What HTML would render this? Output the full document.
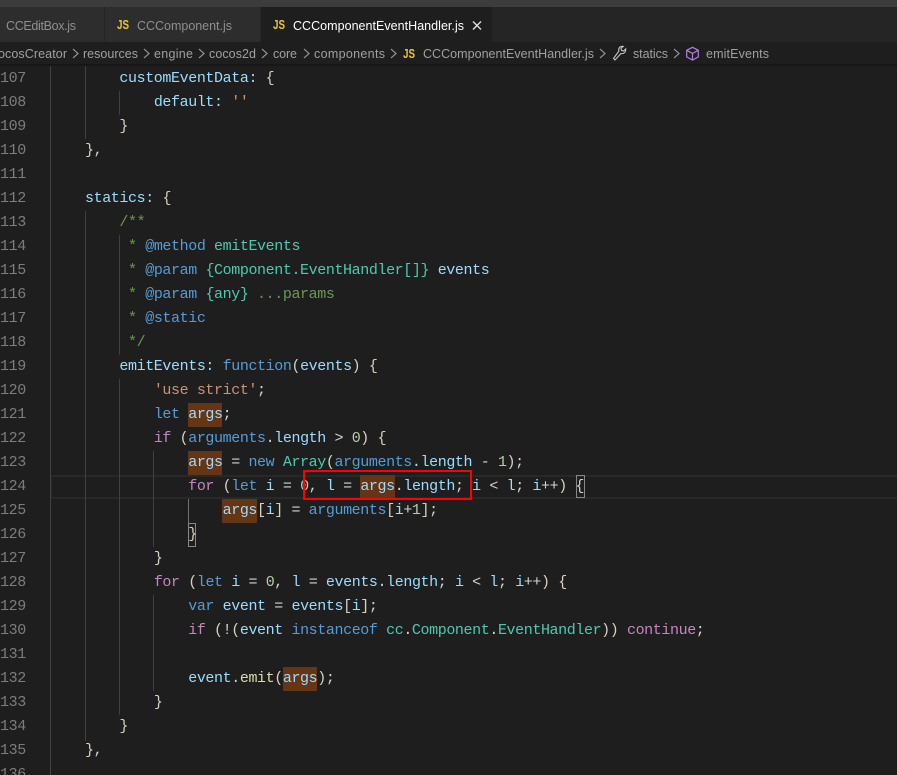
<!DOCTYPE html>
<html><head><meta charset="utf-8">
<style>
html,body{margin:0;padding:0;background:#1e1e1e;}
#r{position:relative;width:897px;height:775px;overflow:hidden;background:#1e1e1e;}
#e{position:absolute;left:0;top:1px;width:897px;height:775px;}
.a{position:absolute;}
.g{position:absolute;width:1px;background:#404040;}
.n{position:absolute;left:0;width:24.5px;text-align:right;color:#7d7d7d;font:15px/24px "Liberation Mono",monospace;letter-spacing:-.4px;height:24px;}
.l{position:absolute;left:50.6px;white-space:pre;color:#d4d4d4;font:15px/24px "Liberation Mono",monospace;letter-spacing:-.4px;height:24px;}
.h{position:absolute;background:#653616;height:24px;}
.p{color:#9cdcfe}.k{color:#569cd6}.c{color:#c586c0}.s{color:#ce9178}.m{color:#6a9955}.t{color:#4ec9b0}.f{color:#dcdcaa}.d{color:#b5cea8}.b{color:#d8d0c0}
svg text{font-family:"Liberation Sans",sans-serif;font-size:12.5px;}
svg text.j{font-size:12.5px;font-weight:700;}
</style></head><body>
<div id="r">
<div id="e">
<div class="a" style="left:50px;top:474px;width:847px;height:24px;box-sizing:border-box;border:2px solid #282828;border-right:0"></div>

<div class="g" style="left:50px;top:65px;height:709px"></div>
<div class="g" style="left:85px;top:65px;height:73px"></div>
<div class="g" style="left:85px;top:210px;height:530px"></div>
<div class="g" style="left:119px;top:90px;height:24px"></div>
<div class="g" style="left:119px;top:234px;height:120px"></div>
<div class="g" style="left:119px;top:378px;height:336px"></div>
<div class="g" style="left:153px;top:450px;height:96px"></div>
<div class="g" style="left:153px;top:594px;height:96px"></div>
<div class="g" style="left:188px;top:498px;height:24px;background:#707070"></div>

<div class="h" style="left:188px;top:402px;width:34px"></div>
<div class="h" style="left:188px;top:450px;width:34px"></div>
<div class="h" style="left:360px;top:474px;width:35px"></div>
<div class="h" style="left:222px;top:498px;width:35px"></div>
<div class="h" style="left:283px;top:666px;width:34px"></div>

<div class="a" style="left:576px;top:474px;width:9px;height:23px;box-sizing:border-box;border:1px solid #888"></div>
<div class="a" style="left:188px;top:522px;width:8px;height:24px;box-sizing:border-box;border:1px solid #888"></div>

<div class="n" style="top:66px">107</div>
<div class="n" style="top:90px">108</div>
<div class="n" style="top:114px">109</div>
<div class="n" style="top:138px">110</div>
<div class="n" style="top:162px">111</div>
<div class="n" style="top:186px">112</div>
<div class="n" style="top:210px">113</div>
<div class="n" style="top:234px">114</div>
<div class="n" style="top:258px">115</div>
<div class="n" style="top:282px">116</div>
<div class="n" style="top:306px">117</div>
<div class="n" style="top:330px">118</div>
<div class="n" style="top:354px">119</div>
<div class="n" style="top:378px">120</div>
<div class="n" style="top:402px">121</div>
<div class="n" style="top:426px">122</div>
<div class="n" style="top:450px">123</div>
<div class="n" style="top:474px">124</div>
<div class="n" style="top:498px">125</div>
<div class="n" style="top:522px">126</div>
<div class="n" style="top:546px">127</div>
<div class="n" style="top:570px">128</div>
<div class="n" style="top:594px">129</div>
<div class="n" style="top:618px">130</div>
<div class="n" style="top:642px">131</div>
<div class="n" style="top:666px">132</div>
<div class="n" style="top:690px">133</div>
<div class="n" style="top:714px">134</div>
<div class="n" style="top:738px">135</div>
<div class="n" style="top:762px">136</div>

<div class="l" style="top:66px">        <span class="p">customEventData</span><span class="p">:</span> <span class="b">{</span></div>
<div class="l" style="top:90px">            <span class="p">default</span><span class="p">:</span> <span class="s">''</span></div>
<div class="l" style="top:114px">        <span class="b">}</span></div>
<div class="l" style="top:138px">    <span class="b">}</span>,</div>
<div class="l" style="top:186px">    <span class="p">statics</span><span class="p">:</span> <span class="b">{</span></div>
<div class="l m" style="top:210px">        /**</div>
<div class="l m" style="top:234px">         * <span class="k">@method</span> <span class="t">emitEvents</span></div>
<div class="l m" style="top:258px">         * <span class="k">@param</span> <span class="t">{Component.EventHandler[]}</span> <span class="p">events</span></div>
<div class="l m" style="top:282px">         * <span class="k">@param</span> <span class="t">{any}</span> ...params</div>
<div class="l m" style="top:306px">         * <span class="k">@static</span></div>
<div class="l m" style="top:330px">         */</div>
<div class="l" style="top:354px">        <span class="p">emitEvents</span><span class="p">:</span> <span class="k">function</span><span class="b">(</span><span class="p">events</span><span class="b">)</span> <span class="b">{</span></div>
<div class="l" style="top:378px">            <span class="s">'use strict'</span>;</div>
<div class="l" style="top:402px">            <span class="k">let</span> <span class="p">args</span>;</div>
<div class="l" style="top:426px">            <span class="c">if</span> <span class="b">(</span><span class="k">arguments</span>.<span class="p">length</span> &gt; <span class="d">0</span><span class="b">)</span> <span class="b">{</span></div>
<div class="l" style="top:450px">                <span class="p">args</span> = <span class="k">new</span> <span class="t">Array</span><span class="b">(</span><span class="k">arguments</span>.<span class="p">length</span> - <span class="d">1</span><span class="b">)</span>;</div>
<div class="l" style="top:474px">                <span class="c">for</span> <span class="b">(</span><span class="k">let</span> <span class="p">i</span> = <span class="d">0</span>, <span class="p">l</span> = <span class="p">args</span>.<span class="p">length</span>; <span class="p">i</span> &lt; <span class="p">l</span>; <span class="p">i</span>++<span class="b">)</span> <span class="b">{</span></div>
<div class="l" style="top:498px">                    <span class="p">args</span><span class="b">[</span><span class="p">i</span><span class="b">]</span> = <span class="k">arguments</span><span class="b">[</span><span class="p">i</span>+<span class="d">1</span><span class="b">]</span>;</div>
<div class="l" style="top:522px">                <span class="b">}</span></div>
<div class="l" style="top:546px">            <span class="b">}</span></div>
<div class="l" style="top:570px">            <span class="c">for</span> <span class="b">(</span><span class="k">let</span> <span class="p">i</span> = <span class="d">0</span>, <span class="p">l</span> = <span class="p">events</span>.<span class="p">length</span>; <span class="p">i</span> &lt; <span class="p">l</span>; <span class="p">i</span>++<span class="b">)</span> <span class="b">{</span></div>
<div class="l" style="top:594px">                <span class="k">var</span> <span class="p">event</span> = <span class="p">events</span><span class="b">[</span><span class="p">i</span><span class="b">]</span>;</div>
<div class="l" style="top:618px">                <span class="c">if</span> <span class="b">(</span>!<span class="b">(</span><span class="p">event</span> <span class="k">instanceof</span> <span class="t">cc</span>.<span class="t">Component</span>.<span class="t">EventHandler</span><span class="b">))</span> <span class="c">continue</span>;</div>
<div class="l" style="top:666px">                <span class="p">event</span>.<span class="f">emit</span><span class="b">(</span><span class="p">args</span><span class="b">)</span>;</div>
<div class="l" style="top:690px">            <span class="b">}</span></div>
<div class="l" style="top:714px">        <span class="b">}</span></div>
<div class="l" style="top:738px">    <span class="b">}</span>,</div>
</div>

<div class="a" style="left:303px;top:470px;width:169px;height:30px;box-sizing:border-box;border:2px solid #f00"></div>

<div class="a" style="left:0;top:0;width:897px;height:7px;background:#3c3c3c"></div>
<div class="a" style="left:0;top:7px;width:897px;height:35px;background:#252526"></div>
<div class="a" style="left:0;top:7px;width:104px;height:35px;background:#2d2d2d"></div>
<div class="a" style="left:105px;top:7px;width:155px;height:35px;background:#2d2d2d"></div>
<div class="a" style="left:261px;top:7px;width:231px;height:35px;background:#1e1e1e"></div>
<div class="a" style="left:0;top:42px;width:897px;height:22px;background:#1e1e1e"></div>
<div class="a" style="left:0;top:64px;width:897px;height:3px;background:linear-gradient(#151515,rgba(30,30,30,0))"></div>

<svg class="a" style="left:0;top:0" width="897" height="66" viewBox="0 0 897 66">
<g fill="#8f8f8f">
<text x="6" y="30" textLength="70" lengthAdjust="spacing">CCEditBox.js</text>
<text x="137" y="30" textLength="95" lengthAdjust="spacing">CCComponent.js</text>
</g>
<text x="293" y="30" fill="#ffffff" textLength="171" lengthAdjust="spacing">CCComponentEventHandler.js</text>
<g fill="#e8c92c">
<text class="j" x="117" y="29" textLength="12" lengthAdjust="spacingAndGlyphs">JS</text>
<text class="j" x="273" y="29" textLength="12" lengthAdjust="spacingAndGlyphs">JS</text>
<text class="j" x="403" y="58" textLength="12" lengthAdjust="spacingAndGlyphs">JS</text>
</g>
<path d="M473 21.5l8 8M481 21.5l-8 8" stroke="#e0e0e0" stroke-width="1.4" fill="none"/>
<g fill="#a0a0a0">
<text x="-2" y="58" textLength="69" lengthAdjust="spacing">ocosCreator</text>
<text x="83" y="58" textLength="55" lengthAdjust="spacing">resources</text>
<text x="154" y="58" textLength="39" lengthAdjust="spacing">engine</text>
<text x="209" y="58" textLength="47" lengthAdjust="spacing">cocos2d</text>
<text x="273" y="58" textLength="24" lengthAdjust="spacing">core</text>
<text x="314" y="58" textLength="71" lengthAdjust="spacing">components</text>
<text x="423" y="58" textLength="171" lengthAdjust="spacing">CCComponentEventHandler.js</text>
<text x="633" y="58" textLength="35" lengthAdjust="spacing">statics</text>
<text x="706" y="58" textLength="63" lengthAdjust="spacing">emitEvents</text>
</g>
<g fill="none" stroke="#a0a0a0" stroke-width="1.1">
<path d="M73 49l5 4.5-5 4.5M144 49l5 4.5-5 4.5M199 49l5 4.5-5 4.5M262 49l5 4.5-5 4.5M304 49l5 4.5-5 4.5M391 49l5 4.5-5 4.5M600 49l5 4.5-5 4.5M674 49l5 4.5-5 4.5"/>
<path d="M613.5 58.5l1.5 1.5 6-6.5c2 .5 4-.5 4.5-2.5l.2-2-2.2 2-2-.6-.5-2 2.2-2c-2.2-.5-4.5 1-4.5 3.2 0 .5 0 1 .2 1.5z" stroke="#c5c5c5"/>
<path d="M692.5 47.3l5.8 3v6.6l-5.8 3.2-5.8-3.2v-6.6zM686.7 50.3l5.8 3.1 5.8-3.1M692.5 53.4v6.7" stroke="#b180d7" stroke-width="1.2"/>
</g>
</svg>
</div>
</body></html>
